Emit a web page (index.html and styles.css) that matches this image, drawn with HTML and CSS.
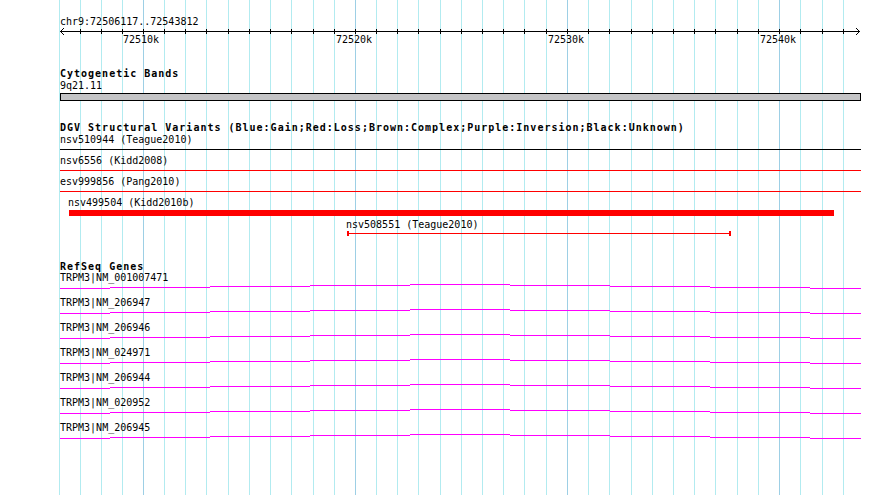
FILE: index.html
```html
<!DOCTYPE html>
<html lang="en">
<head>
    <meta charset="UTF-8">
    <title>chr9:72506117..72543812</title>
    <link rel="stylesheet" href="styles.css">
</head>
<body>
    <div class="browser">
        <!-- grid lines sit under all tracks -->
        <svg class="grid" width="890" height="495">
            <path class="grid-minor" d="M59.5 0V495M80.5 0V495M101.5 0V495M122.5 0V495M164.5 0V495M185.5 0V495M206.5 0V495M228.5 0V495M249.5 0V495M270.5 0V495M291.5 0V495M313.5 0V495M334.5 0V495M376.5 0V495M397.5 0V495M418.5 0V495M440.5 0V495M461.5 0V495M482.5 0V495M503.5 0V495M524.5 0V495M546.5 0V495M588.5 0V495M609.5 0V495M631.5 0V495M652.5 0V495M673.5 0V495M694.5 0V495M715.5 0V495M737.5 0V495M758.5 0V495M800.5 0V495M822.5 0V495M843.5 0V495"/>
            <path class="grid-major" d="M143.5 0V495M355.5 0V495M567.5 0V495M779.5 0V495"/>
        </svg>

        <div class="tracks">
            <section class="ruler">
                <div class="label">chr9:72506117..72543812</div>
                <svg class="strip" width="890" height="22">
                    <path class="ink" d="M60 3.5H860M64 0L60.5 3.5L64 7M856 0L859.5 3.5L856 7"/>
                    <path class="ink" d="M80.5 1V6M101.5 1V6M122.5 1V6M143.5 1V6M164.5 1V6M185.5 1V6M206.5 1V6M228.5 1V6M249.5 1V6M270.5 1V6M291.5 1V6M313.5 1V6M334.5 1V6M355.5 1V6M376.5 1V6M397.5 1V6M418.5 1V6M440.5 1V6M461.5 1V6M482.5 1V6M503.5 1V6M524.5 1V6M546.5 1V6M567.5 1V6M588.5 1V6M609.5 1V6M631.5 1V6M652.5 1V6M673.5 1V6M694.5 1V6M715.5 1V6M737.5 1V6M758.5 1V6M779.5 1V6M800.5 1V6M822.5 1V6M843.5 1V6"/>
                    <text class="tick-label" x="141" y="15">72510k</text>
                    <text class="tick-label" x="354" y="15">72520k</text>
                    <text class="tick-label" x="566" y="15">72530k</text>
                    <text class="tick-label" x="778" y="15">72540k</text>
                </svg>
            </section>

            <section class="track cyto">
                <div class="track-title">Cytogenetic Bands</div>
                <div class="label">9q21.11</div>
                <svg class="strip" width="890" height="10">
                    <rect class="band" x="60.5" y="1.5" width="800" height="7"/>
                </svg>
            </section>

            <section class="track dgv">
                <div class="track-title">DGV Structural Variants (Blue:Gain;Red:Loss;Brown:Complex;Purple:Inversion;Black:Unknown)</div>

                <div class="label">nsv510944 (Teague2010)</div>
                <svg class="strip" width="890" height="9">
                    <path class="ink" d="M60 3.5H861"/>
                </svg>

                <div class="label">nsv6556 (Kidd2008)</div>
                <svg class="strip" width="890" height="9">
                    <path class="loss" d="M60 3.5H861"/>
                </svg>

                <div class="label">esv999856 (Pang2010)</div>
                <svg class="strip" width="890" height="9">
                    <path class="loss" d="M60 3.5H861"/>
                </svg>

                <div class="label" style="padding-left: 68px">nsv499504 (Kidd2010b)</div>
                <svg class="strip" width="890" height="10">
                    <rect class="loss-fill" x="69" y="1" width="765" height="6"/>
                </svg>

                <div class="label" style="padding-left: 346px">nsv508551 (Teague2010)</div>
                <svg class="strip" width="890" height="9">
                    <path class="loss" d="M347 2.5H731"/>
                    <rect class="loss-fill" x="347" y="0" width="2" height="5"/>
                    <rect class="loss-fill" x="729" y="0" width="2" height="5"/>
                </svg>
            </section>

            <section class="track refseq">
                <div class="track-title short">RefSeq Genes</div>

                <div class="label">TRPM3|NM_001007471</div>
                <svg class="strip gene" width="890" height="13">
                    <path class="intron" d="M60 4.5H110M110 3.5H210M210 2.5H310M310 1.5H410M410 0.5H510M510 1.5H610M610 2.5H710M710 3.5H810M810 4.5H861"/>
                </svg>

                <div class="label">TRPM3|NM_206947</div>
                <svg class="strip gene" width="890" height="13">
                    <path class="intron" d="M60 4.5H110M110 3.5H210M210 2.5H310M310 1.5H410M410 0.5H510M510 1.5H610M610 2.5H710M710 3.5H810M810 4.5H861"/>
                </svg>

                <div class="label">TRPM3|NM_206946</div>
                <svg class="strip gene" width="890" height="13">
                    <path class="intron" d="M60 4.5H110M110 3.5H210M210 2.5H310M310 1.5H410M410 0.5H510M510 1.5H610M610 2.5H710M710 3.5H810M810 4.5H861"/>
                </svg>

                <div class="label">TRPM3|NM_024971</div>
                <svg class="strip gene" width="890" height="13">
                    <path class="intron" d="M60 4.5H110M110 3.5H210M210 2.5H310M310 1.5H410M410 0.5H510M510 1.5H610M610 2.5H710M710 3.5H810M810 4.5H861"/>
                </svg>

                <div class="label">TRPM3|NM_206944</div>
                <svg class="strip gene" width="890" height="13">
                    <path class="intron" d="M60 4.5H110M110 3.5H210M210 2.5H310M310 1.5H410M410 0.5H510M510 1.5H610M610 2.5H710M710 3.5H810M810 4.5H861"/>
                </svg>

                <div class="label">TRPM3|NM_020952</div>
                <svg class="strip gene" width="890" height="13">
                    <path class="intron" d="M60 4.5H110M110 3.5H210M210 2.5H310M310 1.5H410M410 0.5H510M510 1.5H610M610 2.5H710M710 3.5H810M810 4.5H861"/>
                </svg>

                <div class="label">TRPM3|NM_206945</div>
                <svg class="strip gene" width="890" height="13">
                    <path class="intron" d="M60 4.5H110M110 3.5H210M210 2.5H310M310 1.5H410M410 0.5H510M510 1.5H610M610 2.5H710M710 3.5H810M810 4.5H861"/>
                </svg>
            </section>
        </div>
    </div>
</body>
</html>
```

FILE: styles.css
```css
body {
    margin: 0;
    background-color: white;
}
.browser {
    position: relative;
    width: 890px;
    height: 495px;
    overflow: hidden;
    padding-top: 16px;
    box-sizing: border-box;
    background-color: white;
    color: black;
    font-family: "DejaVu Sans Mono", "Liberation Mono", monospace;
    font-size: 10px;
}
.grid {
    position: absolute;
    top: 0;
    left: 0;
    shape-rendering: crispEdges;
}
.grid-minor {
    stroke: #b2ebf0;
    stroke-width: 1;
}
.grid-major {
    stroke: #9dcfe5;
    stroke-width: 1;
}
.tracks {
    position: relative;
}
.label {
    height: 12px;
    line-height: 12px;
    padding-left: 60px;
    white-space: pre;
}
.track-title {
    height: 12px;
    line-height: 12px;
    padding-left: 60px;
    font-weight: bold;
    letter-spacing: 1px;
    white-space: pre;
}
.track-title.short {
    height: 11px;
}
.strip {
    display: block;
    shape-rendering: crispEdges;
}
.ink {
    stroke: black;
    stroke-width: 1;
    fill: none;
}
.tick-label {
    font-family: "DejaVu Sans Mono", "Liberation Mono", monospace;
    font-size: 10px;
    text-anchor: middle;
    fill: black;
}
.cyto {
    margin-top: 18px;
}
.band {
    fill: #c4c4c6;
    stroke: black;
    stroke-width: 1;
}
.dgv {
    margin-top: 20px;
}
.loss {
    stroke: red;
    stroke-width: 1;
    fill: none;
}
.loss-fill {
    fill: red;
}
.refseq {
    margin-top: 21px;
}
.intron {
    stroke: magenta;
    stroke-width: 1;
    fill: none;
}
```
